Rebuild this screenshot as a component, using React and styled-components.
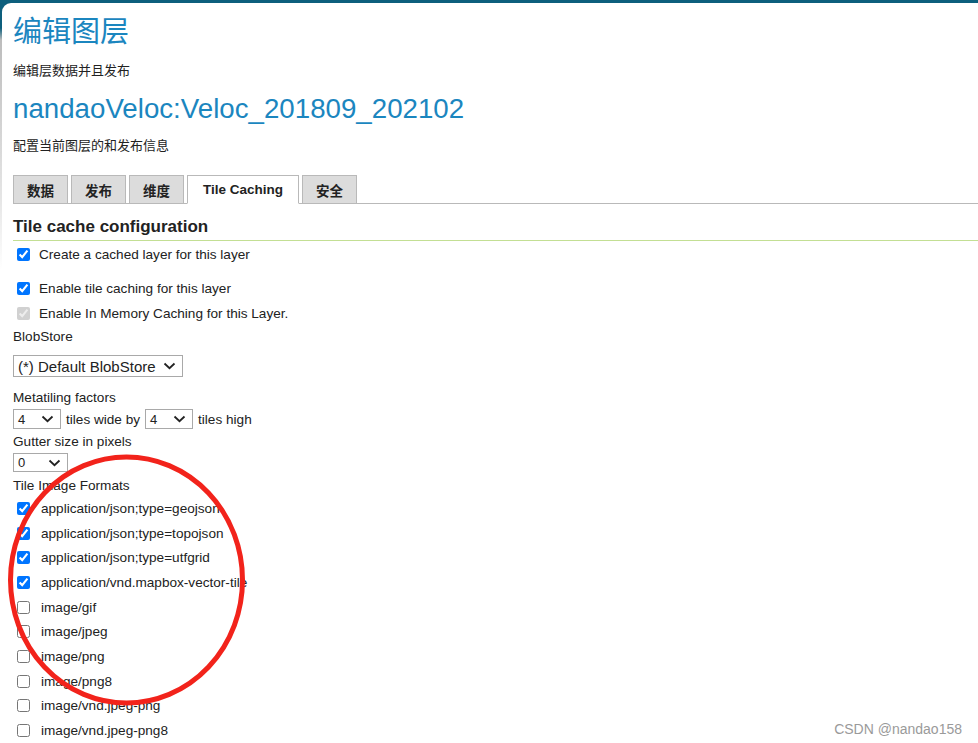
import React from "react";
import styled, { createGlobalStyle } from "styled-components";

const GlobalStyle = createGlobalStyle`
  html, body {
    margin: 0;
    padding: 0;
    background: #fff;
  }
  body {
    font-family: "Liberation Sans", "Noto Sans CJK SC", sans-serif;
    color: #222;
  }
`;

const Frame = styled.div`
  position: relative;
  width: 978px;
  height: 743px;
  overflow: hidden;
  box-sizing: border-box;
  padding: 3px 0 0 2px;
  background: linear-gradient(
    to bottom,
    #0d5f7d 0,
    #0d5f7d 28px,
    #bdbdbd 40px,
    #e6e6e6 200px,
    #ffffff 270px
  );
`;

const Panel = styled.main`
  background: #fff;
  border-top-left-radius: 9px;
  height: 100%;
  box-sizing: border-box;
  padding: 11px 0 0 11px;
`;

const PageTitle = styled.h1`
  margin: 0;
  font-size: 29px;
  font-weight: 400;
  line-height: 36px;
  color: #1b86bf;
`;

const Lead = styled.p`
  margin: 13px 0 0;
  font-size: 13px;
  line-height: 16px;
  color: #222;
`;

const LayerName = styled.h2`
  margin: 13px 0 0;
  font-size: 27.7px;
  font-weight: 400;
  line-height: 33px;
  color: #1b86bf;
`;

const Tabs = styled.nav`
  display: flex;
  align-items: flex-end;
  gap: 3px;
  margin-top: 21px;
  border-bottom: 1px solid #b9b9b9;
`;

const Tab = styled.div`
  box-sizing: border-box;
  height: ${(p) => (p.$active ? "29px" : "28px")};
  margin-bottom: ${(p) => (p.$active ? "-1px" : "0")};
  padding: 0 ${(p) => (p.$active ? 15 : 13)}px;
  display: flex;
  align-items: center;
  font-size: 13.5px;
  font-weight: 700;
  color: #222;
  background: ${(p) => (p.$active ? "#fff" : "#dcdcdc")};
  border: 1px solid #b9b9b9;
  border-bottom: ${(p) => (p.$active ? "1px solid #fff" : "none")};
`;

const SectionTitle = styled.h3`
  margin: 13px 0 0;
  padding-bottom: 3px;
  font-size: 17px;
  line-height: 20px;
  font-weight: 700;
  color: #222;
  border-bottom: 1px solid #c3df94;
`;

const Form = styled.div`
  display: flex;
  flex-direction: column;
  font-size: 13.6px;
`;

const CheckRow = styled.label`
  display: flex;
  align-items: center;
  gap: 9px;
  height: ${(p) => p.$h || 25}px;
  margin-top: ${(p) => p.$mt || 0}px;
  padding-left: 4px;
  color: #222;

  input {
    margin: 0;
    width: 13px;
    height: 13px;
    accent-color: #0075ff;
  }
`;

const FormatRow = styled(CheckRow)`
  height: 24.7px;
  gap: 11px;
`;

const FieldLabel = styled.div`
  line-height: 16px;
  color: #222;
  margin-top: ${(p) => p.$mt || 0}px;
`;

const Inline = styled.div`
  display: flex;
  align-items: center;
  gap: 5px;
  color: #222;
  margin-top: ${(p) => p.$mt || 0}px;
`;

const SelectBox = styled.div`
  box-sizing: border-box;
  display: inline-flex;
  align-items: center;
  justify-content: space-between;
  width: ${(p) => p.$w}px;
  height: ${(p) => p.$h || 20}px;
  padding: 0 6px 0 4px;
  border: 1px solid #a9a9a9;
  background: #fff;
  font-size: ${(p) => p.$fs || 13}px;
  color: #222;
  margin-top: ${(p) => p.$mt || 0}px;
  align-self: flex-start;

  svg {
    flex: none;
  }
`;

const Chevron = () => (
  <svg width="13" height="8" viewBox="0 0 13 8">
    <path d="M1.5 1.5 L6.5 6.2 L11.5 1.5" fill="none" stroke="#222" strokeWidth="1.8" />
  </svg>
);

const Select = ({ value, ...rest }) => (
  <SelectBox {...rest}>
    <span>{value}</span>
    <Chevron />
  </SelectBox>
);

const Circle = styled.svg`
  position: absolute;
  left: 0;
  top: 0;
  pointer-events: none;
`;

const Watermark = styled.div`
  position: absolute;
  right: 16px;
  bottom: 6px;
  font-size: 14px;
  color: #9a9a9a;
`;

const formats = [
  ["application/json;type=geojson", true],
  ["application/json;type=topojson", true],
  ["application/json;type=utfgrid", true],
  ["application/vnd.mapbox-vector-tile", true],
  ["image/gif", false],
  ["image/jpeg", false],
  ["image/png", false],
  ["image/png8", false],
  ["image/vnd.jpeg-png", false],
  ["image/vnd.jpeg-png8", false],
];

export default function App() {
  return (
    <Frame>
      <GlobalStyle />
      <Panel>
        <PageTitle>编辑图层</PageTitle>
        <Lead>编辑层数据并且发布</Lead>
        <LayerName>nandaoVeloc:Veloc_201809_202102</LayerName>
        <Lead>配置当前图层的和发布信息</Lead>

        <Tabs>
          <Tab>数据</Tab>
          <Tab>发布</Tab>
          <Tab>维度</Tab>
          <Tab $active>Tile Caching</Tab>
          <Tab>安全</Tab>
        </Tabs>

        <SectionTitle>Tile cache configuration</SectionTitle>

        <Form>
          <CheckRow $h={26}>
            <input type="checkbox" defaultChecked />
            Create a cached layer for this layer
          </CheckRow>
          <CheckRow $mt={9}>
            <input type="checkbox" defaultChecked />
            Enable tile caching for this layer
          </CheckRow>
          <CheckRow>
            <input type="checkbox" defaultChecked disabled />
            Enable In Memory Caching for this Layer.
          </CheckRow>
          <FieldLabel $mt={3}>BlobStore</FieldLabel>
          <Select value="(*) Default BlobStore" $w={170} $h={22} $fs={15} $mt={10} />
          <FieldLabel $mt={13}>Metatiling factors</FieldLabel>
          <Inline $mt={3}>
            <Select value="4" $w={48} />
            tiles wide by
            <Select value="4" $w={48} />
            tiles high
          </Inline>
          <FieldLabel $mt={5}>Gutter size in pixels</FieldLabel>
          <Select value="0" $w={55} $h={19} $mt={3} />
          <FieldLabel $mt={6}>Tile Image Formats</FieldLabel>
          <div style={{ marginTop: 2 }}>
            {formats.map(([name, on]) => (
              <FormatRow key={name}>
                <input type="checkbox" defaultChecked={on} />
                {name}
              </FormatRow>
            ))}
          </div>
        </Form>
      </Panel>

      <Circle width="978" height="743">
        <ellipse cx="126.5" cy="580" rx="116" ry="123" fill="none" stroke="#f2231b" strokeWidth="5" />
      </Circle>
      <Watermark>CSDN @nandao158</Watermark>
    </Frame>
  );
}
